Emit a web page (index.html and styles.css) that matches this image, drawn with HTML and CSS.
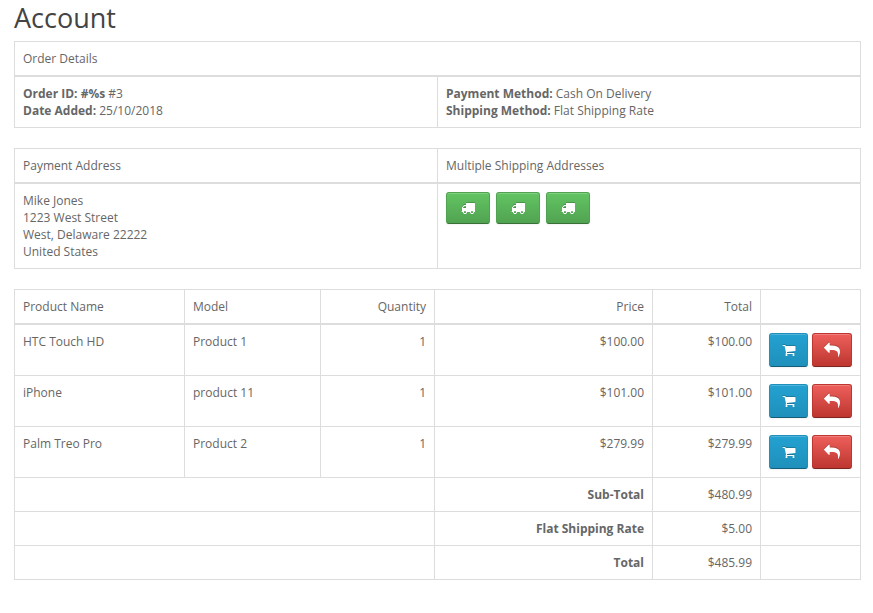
FILE: index.html
```html
<!DOCTYPE html>
<html lang="en">
<head>
<meta charset="utf-8">
<title>Account</title>
<link rel="stylesheet" href="styles.css">
</head>
<body>
<main class="page">
  <h1 class="title">Account</h1>
  <table class="tbl split">
    <thead><tr><th colspan="2">Order Details</th></tr></thead>
    <tbody>
      <tr>
        <td><b>Order ID: #%s</b> #3<br><b>Date Added:</b> 25/10/2018</td>
        <td><b>Payment Method:</b> Cash On Delivery<br><b>Shipping Method:</b> Flat Shipping Rate</td>
      </tr>
    </tbody>
  </table>
  <table class="tbl split">
    <thead><tr><th>Payment Address</th><th>Multiple Shipping Addresses</th></tr></thead>
    <tbody>
      <tr>
        <td>Mike Jones<br>1223 West Street<br>West, Delaware 22222<br>United States</td>
        <td>
          <div class="ships">
            <a class="btn ship green"><svg class="ico" viewBox="0 0 1792 1792"><path d="M640 1408q0-52-38-90t-90-38-90 38-38 90 38 90 90 38 90-38 38-90zm-384-512h384v-256h-158q-13 0-22 9l-195 195q-9 9-9 22v30zm1280 512q0-52-38-90t-90-38-90 38-38 90 38 90 90 38 90-38 38-90zm256-1088v1024q0 15-4 26.5t-13.5 18.5-16.5 11.5-23.5 6-22.5 2-25.5 0-22.5-.5q0 106-75 181t-181 75-181-75-75-181h-384q0 106-75 181t-181 75-181-75-75-181h-64q-3 0-22.5.5t-25.5 0-22.5-2-23.5-6-16.5-11.5-13.5-18.5-4-26.5q0-26 19-45t45-19v-320q0-8-.5-35t0-38 2.5-34.5 6.5-37 14-30.5 22.5-30l198-198q19-19 50.5-32t58.5-13h160v-192q0-26 19-45t45-19h1024q26 0 45 19t19 45z"/></svg></a>
            <a class="btn ship green"><svg class="ico" viewBox="0 0 1792 1792"><path d="M640 1408q0-52-38-90t-90-38-90 38-38 90 38 90 90 38 90-38 38-90zm-384-512h384v-256h-158q-13 0-22 9l-195 195q-9 9-9 22v30zm1280 512q0-52-38-90t-90-38-90 38-38 90 38 90 90 38 90-38 38-90zm256-1088v1024q0 15-4 26.5t-13.5 18.5-16.5 11.5-23.5 6-22.5 2-25.5 0-22.5-.5q0 106-75 181t-181 75-181-75-75-181h-384q0 106-75 181t-181 75-181-75-75-181h-64q-3 0-22.5.5t-25.5 0-22.5-2-23.5-6-16.5-11.5-13.5-18.5-4-26.5q0-26 19-45t45-19v-320q0-8-.5-35t0-38 2.5-34.5 6.5-37 14-30.5 22.5-30l198-198q19-19 50.5-32t58.5-13h160v-192q0-26 19-45t45-19h1024q26 0 45 19t19 45z"/></svg></a>
            <a class="btn ship green"><svg class="ico" viewBox="0 0 1792 1792"><path d="M640 1408q0-52-38-90t-90-38-90 38-38 90 38 90 90 38 90-38 38-90zm-384-512h384v-256h-158q-13 0-22 9l-195 195q-9 9-9 22v30zm1280 512q0-52-38-90t-90-38-90 38-38 90 38 90 90 38 90-38 38-90zm256-1088v1024q0 15-4 26.5t-13.5 18.5-16.5 11.5-23.5 6-22.5 2-25.5 0-22.5-.5q0 106-75 181t-181 75-181-75-75-181h-384q0 106-75 181t-181 75-181-75-75-181h-64q-3 0-22.5.5t-25.5 0-22.5-2-23.5-6-16.5-11.5-13.5-18.5-4-26.5q0-26 19-45t45-19v-320q0-8-.5-35t0-38 2.5-34.5 6.5-37 14-30.5 22.5-30l198-198q19-19 50.5-32t58.5-13h160v-192q0-26 19-45t45-19h1024q26 0 45 19t19 45z"/></svg></a>
          </div>
        </td>
      </tr>
    </tbody>
  </table>
  <table class="tbl products">
    <colgroup>
      <col class="c-name"><col class="c-model"><col class="c-qty"><col class="c-price"><col class="c-total"><col class="c-act">
    </colgroup>
    <thead>
      <tr><th>Product Name</th><th>Model</th><th class="r">Quantity</th><th class="r">Price</th><th class="r">Total</th><th></th></tr>
    </thead>
    <tbody>
      <tr><td>HTC Touch HD</td><td>Product 1</td><td class="r">1</td><td class="r">$100.00</td><td class="r">$100.00</td>
        <td><div class="acts">
          <a class="btn cart blue"><svg class="ico" viewBox="0 0 1792 1792"><path d="M704 1536q0 52-38 90t-90 38-90-38-38-90 38-90 90-38 90 38 38 90zm896 0q0 52-38 90t-90 38-90-38-38-90 38-90 90-38 90 38 38 90zm128-1088v512q0 24-16.5 42.5t-40.5 21.5l-1044 122q13 60 13 70 0 16-24 64h920q26 0 45 19t19 45-19 45-45 19h-1024q-26 0-45-19t-19-45q0-11 8-31.5t16-36 21.5-40 15.5-29.5l-177-823h-204q-26 0-45-19t-19-45 19-45 45-19h256q16 0 28.5 6.5t19.5 15.5 13 24.5 8 26 5.5 29.5 4.5 26h1201q26 0 45 19t19 45z"/></svg></a>
          <a class="btn back red"><svg class="ico ico-back" viewBox="0 0 1792 1792"><path d="M1792 1120q0 166-127 451-3 7-10.5 24t-13.5 30-13 22q-12 17-28 17-15 0-23.5-10t-8.5-25q0-9 2.5-26.5t2.5-23.5q5-68 5-123 0-101-17.5-181t-48.5-138.5-80-101-105.5-69.5-133-42.5-154-21.5-175.5-6h-224v256q0 26-19 45t-45 19-45-19l-512-512q-19-19-19-45t19-45l512-512q19-19 45-19t45 19 19 45v256h224q713 0 875 403 53 134 53 333z"/></svg></a>
        </div></td></tr>
      <tr><td>iPhone</td><td>product 11</td><td class="r">1</td><td class="r">$101.00</td><td class="r">$101.00</td>
        <td><div class="acts">
          <a class="btn cart blue"><svg class="ico" viewBox="0 0 1792 1792"><path d="M704 1536q0 52-38 90t-90 38-90-38-38-90 38-90 90-38 90 38 38 90zm896 0q0 52-38 90t-90 38-90-38-38-90 38-90 90-38 90 38 38 90zm128-1088v512q0 24-16.5 42.5t-40.5 21.5l-1044 122q13 60 13 70 0 16-24 64h920q26 0 45 19t19 45-19 45-45 19h-1024q-26 0-45-19t-19-45q0-11 8-31.5t16-36 21.5-40 15.5-29.5l-177-823h-204q-26 0-45-19t-19-45 19-45 45-19h256q16 0 28.5 6.5t19.5 15.5 13 24.5 8 26 5.5 29.5 4.5 26h1201q26 0 45 19t19 45z"/></svg></a>
          <a class="btn back red"><svg class="ico ico-back" viewBox="0 0 1792 1792"><path d="M1792 1120q0 166-127 451-3 7-10.5 24t-13.5 30-13 22q-12 17-28 17-15 0-23.5-10t-8.5-25q0-9 2.5-26.5t2.5-23.5q5-68 5-123 0-101-17.5-181t-48.5-138.5-80-101-105.5-69.5-133-42.5-154-21.5-175.5-6h-224v256q0 26-19 45t-45 19-45-19l-512-512q-19-19-19-45t19-45l512-512q19-19 45-19t45 19 19 45v256h224q713 0 875 403 53 134 53 333z"/></svg></a>
        </div></td></tr>
      <tr><td>Palm Treo Pro</td><td>Product 2</td><td class="r">1</td><td class="r">$279.99</td><td class="r">$279.99</td>
        <td><div class="acts">
          <a class="btn cart blue"><svg class="ico" viewBox="0 0 1792 1792"><path d="M704 1536q0 52-38 90t-90 38-90-38-38-90 38-90 90-38 90 38 38 90zm896 0q0 52-38 90t-90 38-90-38-38-90 38-90 90-38 90 38 38 90zm128-1088v512q0 24-16.5 42.5t-40.5 21.5l-1044 122q13 60 13 70 0 16-24 64h920q26 0 45 19t19 45-19 45-45 19h-1024q-26 0-45-19t-19-45q0-11 8-31.5t16-36 21.5-40 15.5-29.5l-177-823h-204q-26 0-45-19t-19-45 19-45 45-19h256q16 0 28.5 6.5t19.5 15.5 13 24.5 8 26 5.5 29.5 4.5 26h1201q26 0 45 19t19 45z"/></svg></a>
          <a class="btn back red"><svg class="ico ico-back" viewBox="0 0 1792 1792"><path d="M1792 1120q0 166-127 451-3 7-10.5 24t-13.5 30-13 22q-12 17-28 17-15 0-23.5-10t-8.5-25q0-9 2.5-26.5t2.5-23.5q5-68 5-123 0-101-17.5-181t-48.5-138.5-80-101-105.5-69.5-133-42.5-154-21.5-175.5-6h-224v256q0 26-19 45t-45 19-45-19l-512-512q-19-19-19-45t19-45l512-512q19-19 45-19t45 19 19 45v256h224q713 0 875 403 53 134 53 333z"/></svg></a>
        </div></td></tr>
    </tbody>
    <tfoot>
      <tr><td colspan="3"></td><td class="r"><b>Sub-Total</b></td><td class="r">$480.99</td><td></td></tr>
      <tr><td colspan="3"></td><td class="r"><b>Flat Shipping Rate</b></td><td class="r">$5.00</td><td></td></tr>
      <tr><td colspan="3"></td><td class="r"><b>Total</b></td><td class="r">$485.99</td><td></td></tr>
    </tfoot>
  </table>
</main>
</body>
</html>
```

FILE: styles.css
```css
* { box-sizing: border-box; }

html, body { margin: 0; padding: 0; background: #fff; }

body {
  font-family: "Open Sans", sans-serif;
  font-size: 12px;
  line-height: 17px;
  color: #666;
}

.page { padding: 0 12px 33px 14px; }

.title {
  margin: 0 0 5px;
  font-size: 27px;
  font-weight: 400;
  line-height: 36px;
  color: #444;
}

.tbl {
  margin-bottom: 20px;
  border-collapse: collapse;
  border-spacing: 0;
}

.tbl th, .tbl td {
  padding: 8px;
  border: 1px solid #ddd;
  line-height: 17px;
  text-align: left;
  vertical-align: top;
  font-weight: 400;
}

.tbl thead th { border-bottom-width: 2px; }

.tbl .r { text-align: right; }

.tbl b { font-weight: 700; }

.split { table-layout: fixed; width: 847px; }

.products { table-layout: fixed; width: 846px; margin-bottom: 0; }

.c-name { width: 170px; }
.c-model { width: 136px; }
.c-qty { width: 114px; }
.c-price { width: 218px; }
.c-total { width: 108px; }
.c-act { width: 100px; }

.ships { display: flex; gap: 6px; }

.acts { display: flex; gap: 4px; }

.btn {
  display: flex;
  align-items: center;
  justify-content: center;
  border: 1px solid;
  border-radius: 3px;
  box-shadow: inset 0 1px 0 rgba(255,255,255,.2), 0 1px 2px rgba(0,0,0,.05);
}

.ico {
  display: block;
  width: 14px;
  height: 14px;
  fill: #fff;
  filter: drop-shadow(0 -1px 0 rgba(0,0,0,.2));
}

.ico-back { width: 16px; height: 16px; }

.ship { width: 44px; height: 32px; }
.cart { width: 39px; height: 34px; }
.back { width: 40px; height: 34px; }

.green {
  background-image: linear-gradient(to bottom, #62c462, #51a351);
  border-color: #51a351 #51a351 #387038;
}

.blue {
  background-image: linear-gradient(to bottom, #23a1d1, #1f90bb);
  border-color: #1f90bb #1f90bb #145e7a;
}

.red {
  background-image: linear-gradient(to bottom, #ee5f5b, #bd362f);
  border-color: #bd362f #bd362f #802420;
}
```
